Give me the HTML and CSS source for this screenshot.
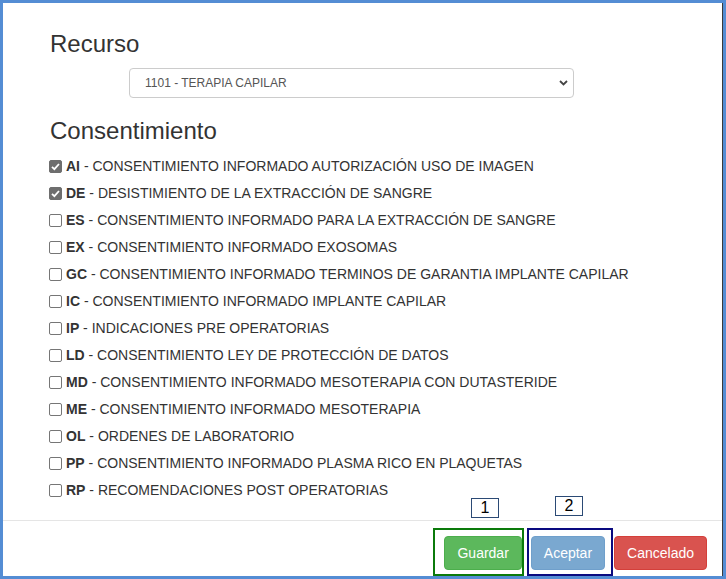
FILE: index.html
```html
<!DOCTYPE html>
<html lang="es">
<head>
<meta charset="utf-8">
<title>Recurso</title>
<link rel="stylesheet" href="styles.css">
</head>
<body>
<div class="modal">
  <div class="modal-body">
    <h3 class="title">Recurso</h3>
    <div class="select">
      <span class="select-text">1101 - TERAPIA CAPILAR</span>
      <svg class="chevron" width="9" height="6" viewBox="0 0 9 6"><path d="M1 1 L4.5 4.5 L8 1" fill="none" stroke="#444" stroke-width="1.8"/></svg>
    </div>
    <h3 class="title title-second">Consentimiento</h3>
    <ul class="checks">
      <li class="check"><span class="box checked"><svg width="13" height="13" viewBox="0 0 13 13"><path d="M3 6.8 L5.4 9.2 L10 4" fill="none" stroke="#fff" stroke-width="1.8"/></svg></span><span><b>AI</b> - CONSENTIMIENTO INFORMADO AUTORIZACIÓN USO DE IMAGEN</span></li>
      <li class="check"><span class="box checked"><svg width="13" height="13" viewBox="0 0 13 13"><path d="M3 6.8 L5.4 9.2 L10 4" fill="none" stroke="#fff" stroke-width="1.8"/></svg></span><span><b>DE</b> - DESISTIMIENTO DE LA EXTRACCIÓN DE SANGRE</span></li>
      <li class="check"><span class="box"></span><span><b>ES</b> - CONSENTIMIENTO INFORMADO PARA LA EXTRACCIÓN DE SANGRE</span></li>
      <li class="check"><span class="box"></span><span><b>EX</b> - CONSENTIMIENTO INFORMADO EXOSOMAS</span></li>
      <li class="check"><span class="box"></span><span><b>GC</b> - CONSENTIMIENTO INFORMADO TERMINOS DE GARANTIA IMPLANTE CAPILAR</span></li>
      <li class="check"><span class="box"></span><span><b>IC</b> - CONSENTIMIENTO INFORMADO IMPLANTE CAPILAR</span></li>
      <li class="check"><span class="box"></span><span><b>IP</b> - INDICACIONES PRE OPERATORIAS</span></li>
      <li class="check"><span class="box"></span><span><b>LD</b> - CONSENTIMIENTO LEY DE PROTECCIÓN DE DATOS</span></li>
      <li class="check"><span class="box"></span><span><b>MD</b> - CONSENTIMIENTO INFORMADO MESOTERAPIA CON DUTASTERIDE</span></li>
      <li class="check"><span class="box"></span><span><b>ME</b> - CONSENTIMIENTO INFORMADO MESOTERAPIA</span></li>
      <li class="check"><span class="box"></span><span><b>OL</b> - ORDENES DE LABORATORIO</span></li>
      <li class="check"><span class="box"></span><span><b>PP</b> - CONSENTIMIENTO INFORMADO PLASMA RICO EN PLAQUETAS</span></li>
      <li class="check"><span class="box"></span><span><b>RP</b> - RECOMENDACIONES POST OPERATORIAS</span></li>
    </ul>
  </div>
  <div class="modal-footer">
    <button class="btn btn-success">Guardar</button>
    <button class="btn btn-primary-disabled">Aceptar</button>
    <button class="btn btn-danger">Cancelado</button>
  </div>
  <div class="mark mark-green"></div>
  <div class="mark mark-navy"></div>
  <div class="tag tag-1">1</div>
  <div class="tag tag-2">2</div>
</div>
</body>
</html>
```
FILE: styles.css
```css
html, body {
  margin: 0;
  padding: 0;
}
body {
  width: 726px;
  height: 579px;
  overflow: hidden;
  background: #548dd4;
  font-family: "Liberation Sans", Arial, sans-serif;
  color: #333;
  font-size: 14px;
}
.modal {
  position: relative;
  margin: 3px 0 0 3px;
  width: 719px;
  height: 573px;
  background: #fff;
  border-right: 1px solid #3a3a3a;
  overflow: hidden;
}
.modal-body {
  padding: 28px 0 20px 47px;
}
.title {
  margin: 0;
  font-size: 24px;
  font-weight: normal;
  line-height: 26px;
  color: #333;
}
.title-second {
  margin-top: 20px;
}
.select {
  margin: 11px 0 0 79px;
  width: 445px;
  height: 30px;
  box-sizing: border-box;
  border: 1px solid #ccc;
  border-radius: 4px;
  display: flex;
  align-items: center;
  justify-content: space-between;
  padding: 0 5px 0 15px;
  font-size: 12px;
  color: #555;
}
.chevron {
  display: block;
}
.checks {
  list-style: none;
  margin: 12px 0 0 -1px;
  padding: 0;
  display: flex;
  flex-direction: column;
  gap: 7px;
}
.check {
  display: flex;
  align-items: center;
  gap: 4px;
  height: 20px;
  line-height: 20px;
  font-size: 14px;
  color: #333;
}
.check b {
  font-weight: bold;
}
.box {
  width: 13px;
  height: 13px;
  box-sizing: border-box;
  border: 1px solid #767676;
  border-radius: 2px;
  background: #fff;
  flex: none;
  position: relative;
}
.box.checked {
  background: #6e6e6e;
  border-color: #6e6e6e;
}
.box svg {
  position: absolute;
  left: -1px;
  top: -1px;
}
.modal-footer {
  border-top: 1px solid #e5e5e5;
  padding: 15px 15px 15px 0;
  display: flex;
  justify-content: flex-end;
  gap: 9px;
}
.btn {
  font-family: "Liberation Sans", Arial, sans-serif;
  font-size: 14px;
  line-height: 20px;
  padding: 6px 12px;
  border: 1px solid transparent;
  border-radius: 4px;
  color: #fff;
  margin: 0;
}
.btn-success {
  background: #5cb85c;
  border-color: #4cae4c;
}
.btn-primary-disabled {
  background: #7aa8d0;
  border-color: #6f9fcb;
}
.btn-danger {
  background: #d9534f;
  border-color: #d43f3a;
}
.mark {
  position: absolute;
  top: 525px;
  height: 48px;
  box-sizing: border-box;
  border: 2px solid;
}
.mark-green {
  left: 430px;
  width: 91px;
  border-color: #0b7a0b;
}
.mark-navy {
  left: 524px;
  width: 86px;
  border-color: #0a0a80;
}
.tag {
  position: absolute;
  width: 28px;
  height: 20px;
  box-sizing: border-box;
  border: 1px solid #2b4a75;
  font-size: 16px;
  line-height: 18px;
  text-align: center;
  color: #000;
  background: #fff;
}
.tag-1 {
  left: 468px;
  top: 495px;
}
.tag-2 {
  left: 552px;
  top: 493px;
}
```
